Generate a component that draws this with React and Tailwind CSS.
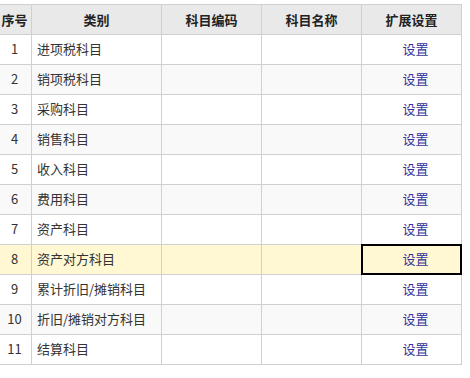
import React from 'react';

const rows = [
    '进项税科目',
    '销项税科目',
    '采购科目',
    '销售科目',
    '收入科目',
    '费用科目',
    '资产科目',
    '资产对方科目',
    '累计折旧/摊销科目',
    '折旧/摊销对方科目',
    '结算科目',
];

const font = { fontFamily: '"Microsoft YaHei", "Noto Sans CJK SC", "Liberation Sans", sans-serif' };

export default function App() {
    return (
        <div className="w-[470px] h-[378px] bg-white overflow-hidden text-[13px] text-[#333]" style={font}>
            <div className="mt-[4px] ml-[-3px] w-[465px] border-t border-l border-[#d0d0d0]">
                {/* 表头 */}
                <div className="flex h-[30px] bg-[#e9e9e9] font-bold text-[#222] border-b border-[#d0d0d0]">
                    <div className="w-[34px] shrink-0 flex items-center justify-center border-r border-[#d0d0d0]">序号</div>
                    <div className="w-[130px] shrink-0 flex items-center justify-center border-r border-[#d0d0d0]">类别</div>
                    <div className="w-[100px] shrink-0 flex items-center justify-center border-r border-[#d0d0d0]">科目编码</div>
                    <div className="w-[100px] shrink-0 flex items-center justify-center border-r border-[#d0d0d0]">科目名称</div>
                    <div className="w-[100px] shrink-0 flex items-center justify-center border-r border-[#d0d0d0]">扩展设置</div>
                </div>

                {rows.map((name, i) => {
                    const selected = i === 7;
                    const bg = selected ? 'bg-[#fff8d2]' : i % 2 === 1 ? 'bg-[#f9f9f9]' : 'bg-white';
                    return (
                        <div key={name} className={`flex h-[30px] border-b border-[#d0d0d0] ${bg}`}>
                            <div className="w-[34px] shrink-0 flex items-center justify-center pb-[2px] border-r border-[#d0d0d0]">{i + 1}</div>
                            <div className="w-[130px] shrink-0 flex items-center pl-[5px] pb-[2px] border-r border-[#d0d0d0]">{name}</div>
                            <div className="w-[100px] shrink-0 border-r border-[#d0d0d0]"></div>
                            <div className="w-[100px] shrink-0 border-r border-[#d0d0d0]"></div>
                            <div className="w-[100px] shrink-0 border-r border-[#d0d0d0] relative flex items-center justify-center pl-[8px] pb-[2px] text-[#33339a]">
                                {selected && (
                                    <div className="absolute inset-[-1px] border-2 border-black"></div>
                                )}
                                <span className="relative">设置</span>
                            </div>
                        </div>
                    );
                })}
            </div>
        </div>
    );
}
